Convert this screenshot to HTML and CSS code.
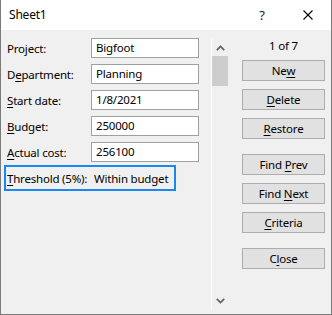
FILE: index.html
```html
<!DOCTYPE html>
<html>
<head>
<meta charset="utf-8">
<link rel="stylesheet" href="styles.css">
</head>
<body>
<div class="window">
  <div class="titlebar">
    <span class="title">Sheet1</span>
    <span class="cap help">?</span>
    <span class="cap close"><svg width="10" height="10" viewBox="0 0 10 10"><path d="M0.5 0.5 L9.5 9.5 M9.5 0.5 L0.5 9.5" stroke="#000" stroke-width="1.1" fill="none"/></svg></span>
  </div>
  <div class="content">
    <div class="form">
      <div class="row"><span class="lbl">Pro<u>j</u>ect:</span><span class="field">Bigfoot</span></div>
      <div class="row"><span class="lbl">D<u>e</u>partment:</span><span class="field">Planning</span></div>
      <div class="row"><span class="lbl"><u>S</u>tart date:</span><span class="field">1/8/2021</span></div>
      <div class="row"><span class="lbl"><u>B</u>udget:</span><span class="field">250000</span></div>
      <div class="row"><span class="lbl"><u>A</u>ctual cost:</span><span class="field">256100</span></div>
      <div class="threshold"><span class="tlbl"><u>T</u>hreshold (5%):</span><span class="tval">Within budget</span></div>
    </div>
    <div class="scrollbar">
      <div class="arrow"><svg width="9" height="6" viewBox="0 0 9 6"><polyline points="0.8,5.2 4.5,1.5 8.2,5.2" stroke="#606060" stroke-width="1.7" fill="none"/></svg></div>
      <div class="thumb"></div>
      <div class="track"></div>
      <div class="arrow"><svg width="9" height="6" viewBox="0 0 9 6"><polyline points="0.8,0.8 4.5,4.5 8.2,0.8" stroke="#606060" stroke-width="1.7" fill="none"/></svg></div>
    </div>
    <div class="side">
      <div class="counter">1 of 7</div>
      <div class="btn">Ne<u>w</u></div>
      <div class="btn"><u>D</u>elete</div>
      <div class="btn"><u>R</u>estore</div>
      <div class="btn group">Find <u>P</u>rev</div>
      <div class="btn">Find <u>N</u>ext</div>
      <div class="btn"><u>C</u>riteria</div>
      <div class="btn group">C<u>l</u>ose</div>
    </div>
  </div>
</div>
</body>
</html>
```

FILE: styles.css
```css
html, body {
  margin: 0;
  padding: 0;
}
body {
  font-family: "Noto Sans", "Open Sans", sans-serif;
  font-size: 11.5px;
  letter-spacing: -0.2px;
  color: #000;
  background: #f0f0f0;
}
u {
  text-decoration: underline;
  text-decoration-thickness: 1px;
  text-underline-offset: 2px;
}
.window {
  width: 332px;
  height: 315px;
  box-sizing: border-box;
  border: 1px solid #7a7a7a;
  border-top: none;
  background: #f0f0f0;
  display: flex;
  flex-direction: column;
}
.titlebar {
  height: 30px;
  background: #fff;
  display: flex;
  align-items: center;
}
.title {
  flex: 1;
  padding-left: 8px;
  line-height: 30px;
  font-size: 12px;
}
.cap {
  width: 46px;
  height: 30px;
  display: flex;
  align-items: center;
  justify-content: center;
}
.help {
  font-size: 13px;
  color: #222;
}
.close svg {
  display: block;
}
.content {
  flex: 1;
  display: flex;
}
.form {
  width: 210px;
  flex-shrink: 0;
  padding-top: 8px;
  display: flex;
  flex-direction: column;
  gap: 6px;
}
.row {
  height: 20px;
  display: flex;
  align-items: center;
  white-space: nowrap;
}
.lbl {
  width: 84px;
  flex-shrink: 0;
  padding-left: 6px;
}
.field {
  width: 108px;
  height: 20px;
  flex-shrink: 0;
  box-sizing: border-box;
  border: 1px solid #a0a0a0;
  background: #fff;
  padding-left: 4px;
  line-height: 18px;
}
.threshold {
  margin-top: -3px;
  margin-left: 3px;
  width: 172px;
  height: 26px;
  box-sizing: border-box;
  border: 2px solid #1a88f0;
  display: flex;
  align-items: center;
  white-space: nowrap;
  overflow: hidden;
}
.tlbl {
  width: 88px;
  flex-shrink: 0;
  padding-left: 1px;
  box-sizing: border-box;
}
.tval {
  flex-shrink: 0;
}
.scrollbar {
  margin-top: 9px;
  height: 270px;
  width: 17px;
  flex-shrink: 0;
  box-sizing: border-box;
  border-left: 1px solid #fff;
  display: flex;
  flex-direction: column;
}
.arrow {
  height: 17px;
  display: flex;
  align-items: center;
  justify-content: center;
}
.arrow svg {
  display: block;
}
.thumb {
  height: 30px;
  background: #cdcdcd;
}
.track {
  flex: 1;
}
.side {
  margin-left: 14px;
  width: 83px;
  flex-shrink: 0;
  display: flex;
  flex-direction: column;
  gap: 8px;
}
.counter {
  padding-top: 8px;
  height: 16px;
  line-height: 16px;
  text-align: center;
  margin-bottom: -2px;
}
.btn {
  height: 21px;
  box-sizing: border-box;
  border: 1px solid #adadad;
  background: #e1e1e1;
  text-align: center;
  line-height: 19px;
}
.btn.group {
  margin-top: 7px;
}
```
